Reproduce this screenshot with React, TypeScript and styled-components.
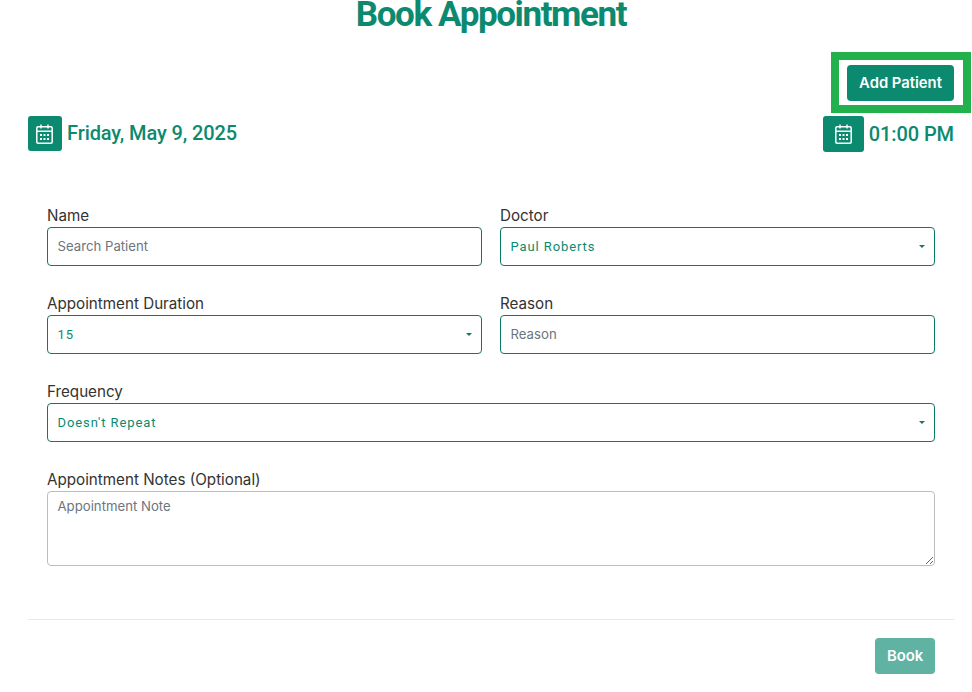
import React from "react";
import styled, { createGlobalStyle } from "styled-components";

const GREEN = "#0b8a70";

const Global = createGlobalStyle`
    html, body { margin: 0; padding: 0; background: #fff; overflow: hidden; }
    * { box-sizing: border-box; }
`;

const Page = styled.div`
    width: 972px;
    height: 692px;
    padding: 0 18px 0 28px;
    overflow: hidden;
    font-family: "Inter", sans-serif;
`;

const Title = styled.h1`
    margin: -8px 0 0;
    height: 46px;
    line-height: 46px;
    text-align: center;
    font-family: "Roboto", sans-serif;
    font-size: 35px;
    font-weight: 700;
    letter-spacing: -1.4px;
    color: ${GREEN};
`;

const ActionRow = styled.div`
    display: flex;
    justify-content: flex-end;
    margin-top: 27px;
`;

const Button = styled.button<{ $muted?: boolean }>`
    position: relative;
    width: 107px;
    height: 36px;
    padding: 0 0 1px;
    border: none;
    border-radius: 4px;
    background: ${(p) => (p.$muted ? "#60b3a2" : GREEN)};
    color: #fff;
    font-family: "Inter", sans-serif;
    font-size: 14.8px;
    font-weight: 600;
`;

const Highlight = styled.span`
    position: absolute;
    top: -13px;
    left: -16px;
    right: -17px;
    bottom: -12px;
    border: 8px solid #22b14c;
`;

const DateRow = styled.div`
    display: flex;
    justify-content: space-between;
    align-items: flex-start;
    margin-top: 15px;
`;

const DateBlock = styled.div`
    display: flex;
    align-items: center;
    gap: 5px;
`;

const IconBox = styled.span<{ $wide?: boolean }>`
    display: flex;
    align-items: center;
    justify-content: center;
    width: ${(p) => (p.$wide ? "41px" : "34px")};
    height: ${(p) => (p.$wide ? "36px" : "35px")};
    padding-right: ${(p) => (p.$wide ? "0" : "2px")};
    border-radius: 3px;
    background: ${GREEN};
`;

const DateText = styled.span`
    font-family: "Roboto", sans-serif;
    font-size: 20px;
    font-weight: 500;
    letter-spacing: -0.1px;
    color: ${GREEN};
    margin-bottom: 2px;
`;

const TimeText = styled(DateText)`
    margin-bottom: 0;
`;

const Form = styled.form`
    display: grid;
    grid-template-columns: 435px 435px;
    column-gap: 18px;
    margin: 53px 0 0 19px;
`;

const Field = styled.div<{ $full?: boolean }>`
    grid-column: ${(p) => (p.$full ? "1 / -1" : "auto")};
    margin-bottom: 27px;
`;

const Label = styled.label`
    display: block;
    height: 22px;
    line-height: 21px;
    font-size: 15.2px;
    font-weight: 400;
    color: #333;
`;

const Input = styled.input`
    display: block;
    width: 100%;
    height: 39px;
    padding: 0 9.5px 1px;
    border: 1px solid #0d7a64;
    border-radius: 4px;
    outline: none;
    font-family: "Inter", sans-serif;
    font-size: 13.2px;
    color: ${GREEN};
    &::placeholder { color: #6c757d; opacity: 1; }
`;

const SelectWrap = styled.div`
    position: relative;
`;

const Select = styled.select`
    display: block;
    width: 100%;
    height: 39px;
    padding: 0 9.5px;
    border: 1px solid #0d7a64;
    border-radius: 4px;
    outline: none;
    appearance: none;
    background: #fff;
    font-family: "Roboto", sans-serif;
    font-size: 13px;
    letter-spacing: 0.9px;
    color: ${GREEN};
`;

const Caret = styled.span`
    position: absolute;
    top: 18px;
    right: 10px;
    border-left: 3.5px solid transparent;
    border-right: 3.5px solid transparent;
    border-top: 3.5px solid #0d7a64;
`;

const Notes = styled.textarea`
    display: block;
    width: 100%;
    height: 75px;
    padding: 6px 9.5px;
    border: 1px solid #bdbdbd;
    border-radius: 4px;
    outline: none;
    resize: vertical;
    font-family: "Inter", sans-serif;
    font-size: 13.2px;
    &::placeholder { color: #6c757d; opacity: 1; }
`;

const Footer = styled.div`
    display: flex;
    justify-content: flex-end;
    margin-top: 26px;
    padding: 18px 19px 0 0;
    border-top: 1px solid #e9e9e9;
`;

const BookButton = styled(Button)`
    width: 60px;
`;

const CalendarIcon = () => (
    <svg width="17" height="20" viewBox="0 0 17 20" fill="none">
        <path d="M5 0.5v4M12 0.5v4" stroke="#fff" strokeWidth="1.4" />
        <rect x="0.8" y="2.8" width="15.4" height="16.4" rx="1.2" stroke="#fff" strokeWidth="1.5" />
        <path d="M1 7.2h15" stroke="#fff" strokeWidth="1.4" />
        <path
            d="M4 10h2v2H4zM7.5 10h2v2h-2zM11 10h2v2h-2zM4 14h2v2H4zM7.5 14h2v2h-2zM11 14h2v2h-2z"
            fill="#fff"
        />
    </svg>
);

const SelectField = ({ value, options }: { value: string; options: string[] }) => (
    <SelectWrap>
        <Select defaultValue={value}>
            {options.map((o) => (
                <option key={o}>{o}</option>
            ))}
        </Select>
        <Caret />
    </SelectWrap>
);

export default function App() {
    return (
        <Page>
            <Global />
            <Title>Book Appointment</Title>
            <ActionRow>
                <Button type="button">
                    Add Patient
                    <Highlight />
                </Button>
            </ActionRow>
            <DateRow>
                <DateBlock>
                    <IconBox>
                        <CalendarIcon />
                    </IconBox>
                    <DateText>Friday, May 9, 2025</DateText>
                </DateBlock>
                <DateBlock>
                    <IconBox $wide>
                        <CalendarIcon />
                    </IconBox>
                    <TimeText>01:00 PM</TimeText>
                </DateBlock>
            </DateRow>
            <Form>
                <Field>
                    <Label>Name</Label>
                    <Input placeholder="Search Patient" />
                </Field>
                <Field>
                    <Label>Doctor</Label>
                    <SelectField value="Paul Roberts" options={["Paul Roberts"]} />
                </Field>
                <Field>
                    <Label>Appointment Duration</Label>
                    <SelectField value="15" options={["15", "30", "45"]} />
                </Field>
                <Field>
                    <Label>Reason</Label>
                    <Input placeholder="Reason" />
                </Field>
                <Field $full>
                    <Label>Frequency</Label>
                    <SelectField value="Doesn't Repeat" options={["Doesn't Repeat"]} />
                </Field>
                <Field $full>
                    <Label>Appointment Notes (Optional)</Label>
                    <Notes placeholder="Appointment Note" />
                </Field>
            </Form>
            <Footer>
                <BookButton type="button" $muted>
                    Book
                </BookButton>
            </Footer>
        </Page>
    );
}
